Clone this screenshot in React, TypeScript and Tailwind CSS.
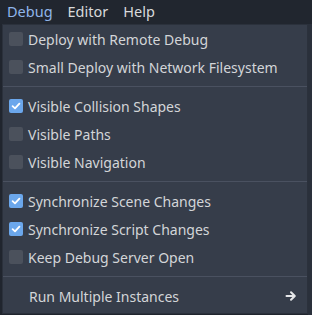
const menus = [
  { label: "Debug", active: true },
  { label: "Editor", active: false },
  { label: "Help", active: false },
];

type Item =
  | { kind: "check"; label: string; checked: boolean }
  | { kind: "sep" }
  | { kind: "sub"; label: string };

const items: Item[] = [
  { kind: "check", label: "Deploy with Remote Debug", checked: false },
  { kind: "check", label: "Small Deploy with Network Filesystem", checked: false },
  { kind: "sep" },
  { kind: "check", label: "Visible Collision Shapes", checked: true },
  { kind: "check", label: "Visible Paths", checked: false },
  { kind: "check", label: "Visible Navigation", checked: false },
  { kind: "sep" },
  { kind: "check", label: "Synchronize Scene Changes", checked: true },
  { kind: "check", label: "Synchronize Script Changes", checked: true },
  { kind: "check", label: "Keep Debug Server Open", checked: false },
  { kind: "sep" },
  { kind: "sub", label: "Run Multiple Instances" },
];

function CheckBox({ checked }: { checked: boolean }) {
  if (!checked) {
    return <span className="h-[14px] w-[14px] shrink-0 rounded-[2px] bg-[#4b515c]" />;
  }
  return (
    <span className="flex h-[14px] w-[14px] shrink-0 items-center justify-center rounded-[2px] bg-[#6ba7ec]">
      <svg width="10" height="10" viewBox="0 0 10 10">
        <path d="M1.6 5.2 L4 7.4 L8.4 2.6" fill="none" stroke="#fff" strokeWidth="1.8" strokeLinecap="round" strokeLinejoin="round" />
      </svg>
    </span>
  );
}

export default function App() {
  return (
    <div className="relative h-[315px] w-[312px] overflow-hidden bg-[#20252e] font-['Noto_Sans',sans-serif] text-[14px]">
      <div className="flex h-[24px] items-center gap-[15px] bg-[#21262f] pl-[7px] text-[14.5px]">
        {menus.map((m) => (
          <span key={m.label} className={m.active ? "text-[#8fb5ea]" : "text-[#d8d9db]"}>
            {m.label}
          </span>
        ))}
      </div>

      <div className="absolute left-[308px] top-[24px] h-[291px] w-[4px] bg-[#2a303b]" />

      <div className="absolute left-[2px] top-[24px] w-[306px] border border-[#2b313c] bg-[#363d4a] pb-[3px] text-[#d3d5d8]">
        {items.map((it, i) => {
          if (it.kind === "sep") {
            return (
              <div key={i} className="flex h-[11px] items-center">
                <div className="h-px w-full bg-[#4a5160]" />
              </div>
            );
          }
          if (it.kind === "sub") {
            return (
              <div key={i} className="flex h-[28px] items-center pl-[26px] pr-[10px]">
                <span className="flex-1">{it.label}</span>
                <svg width="12" height="12" viewBox="0 0 12 12">
                  <path d="M1.5 6 H9.5 M6 2.2 L9.8 6 L6 9.8" fill="none" stroke="#e6e7e9" strokeWidth="2" strokeLinecap="round" strokeLinejoin="round" />
                </svg>
              </div>
            );
          }
          return (
            <div key={i} className="flex h-[28px] items-center gap-[5px] pl-[6px]">
              <CheckBox checked={it.checked} />
              <span>{it.label}</span>
            </div>
          );
        })}
      </div>
    </div>
  );
}
